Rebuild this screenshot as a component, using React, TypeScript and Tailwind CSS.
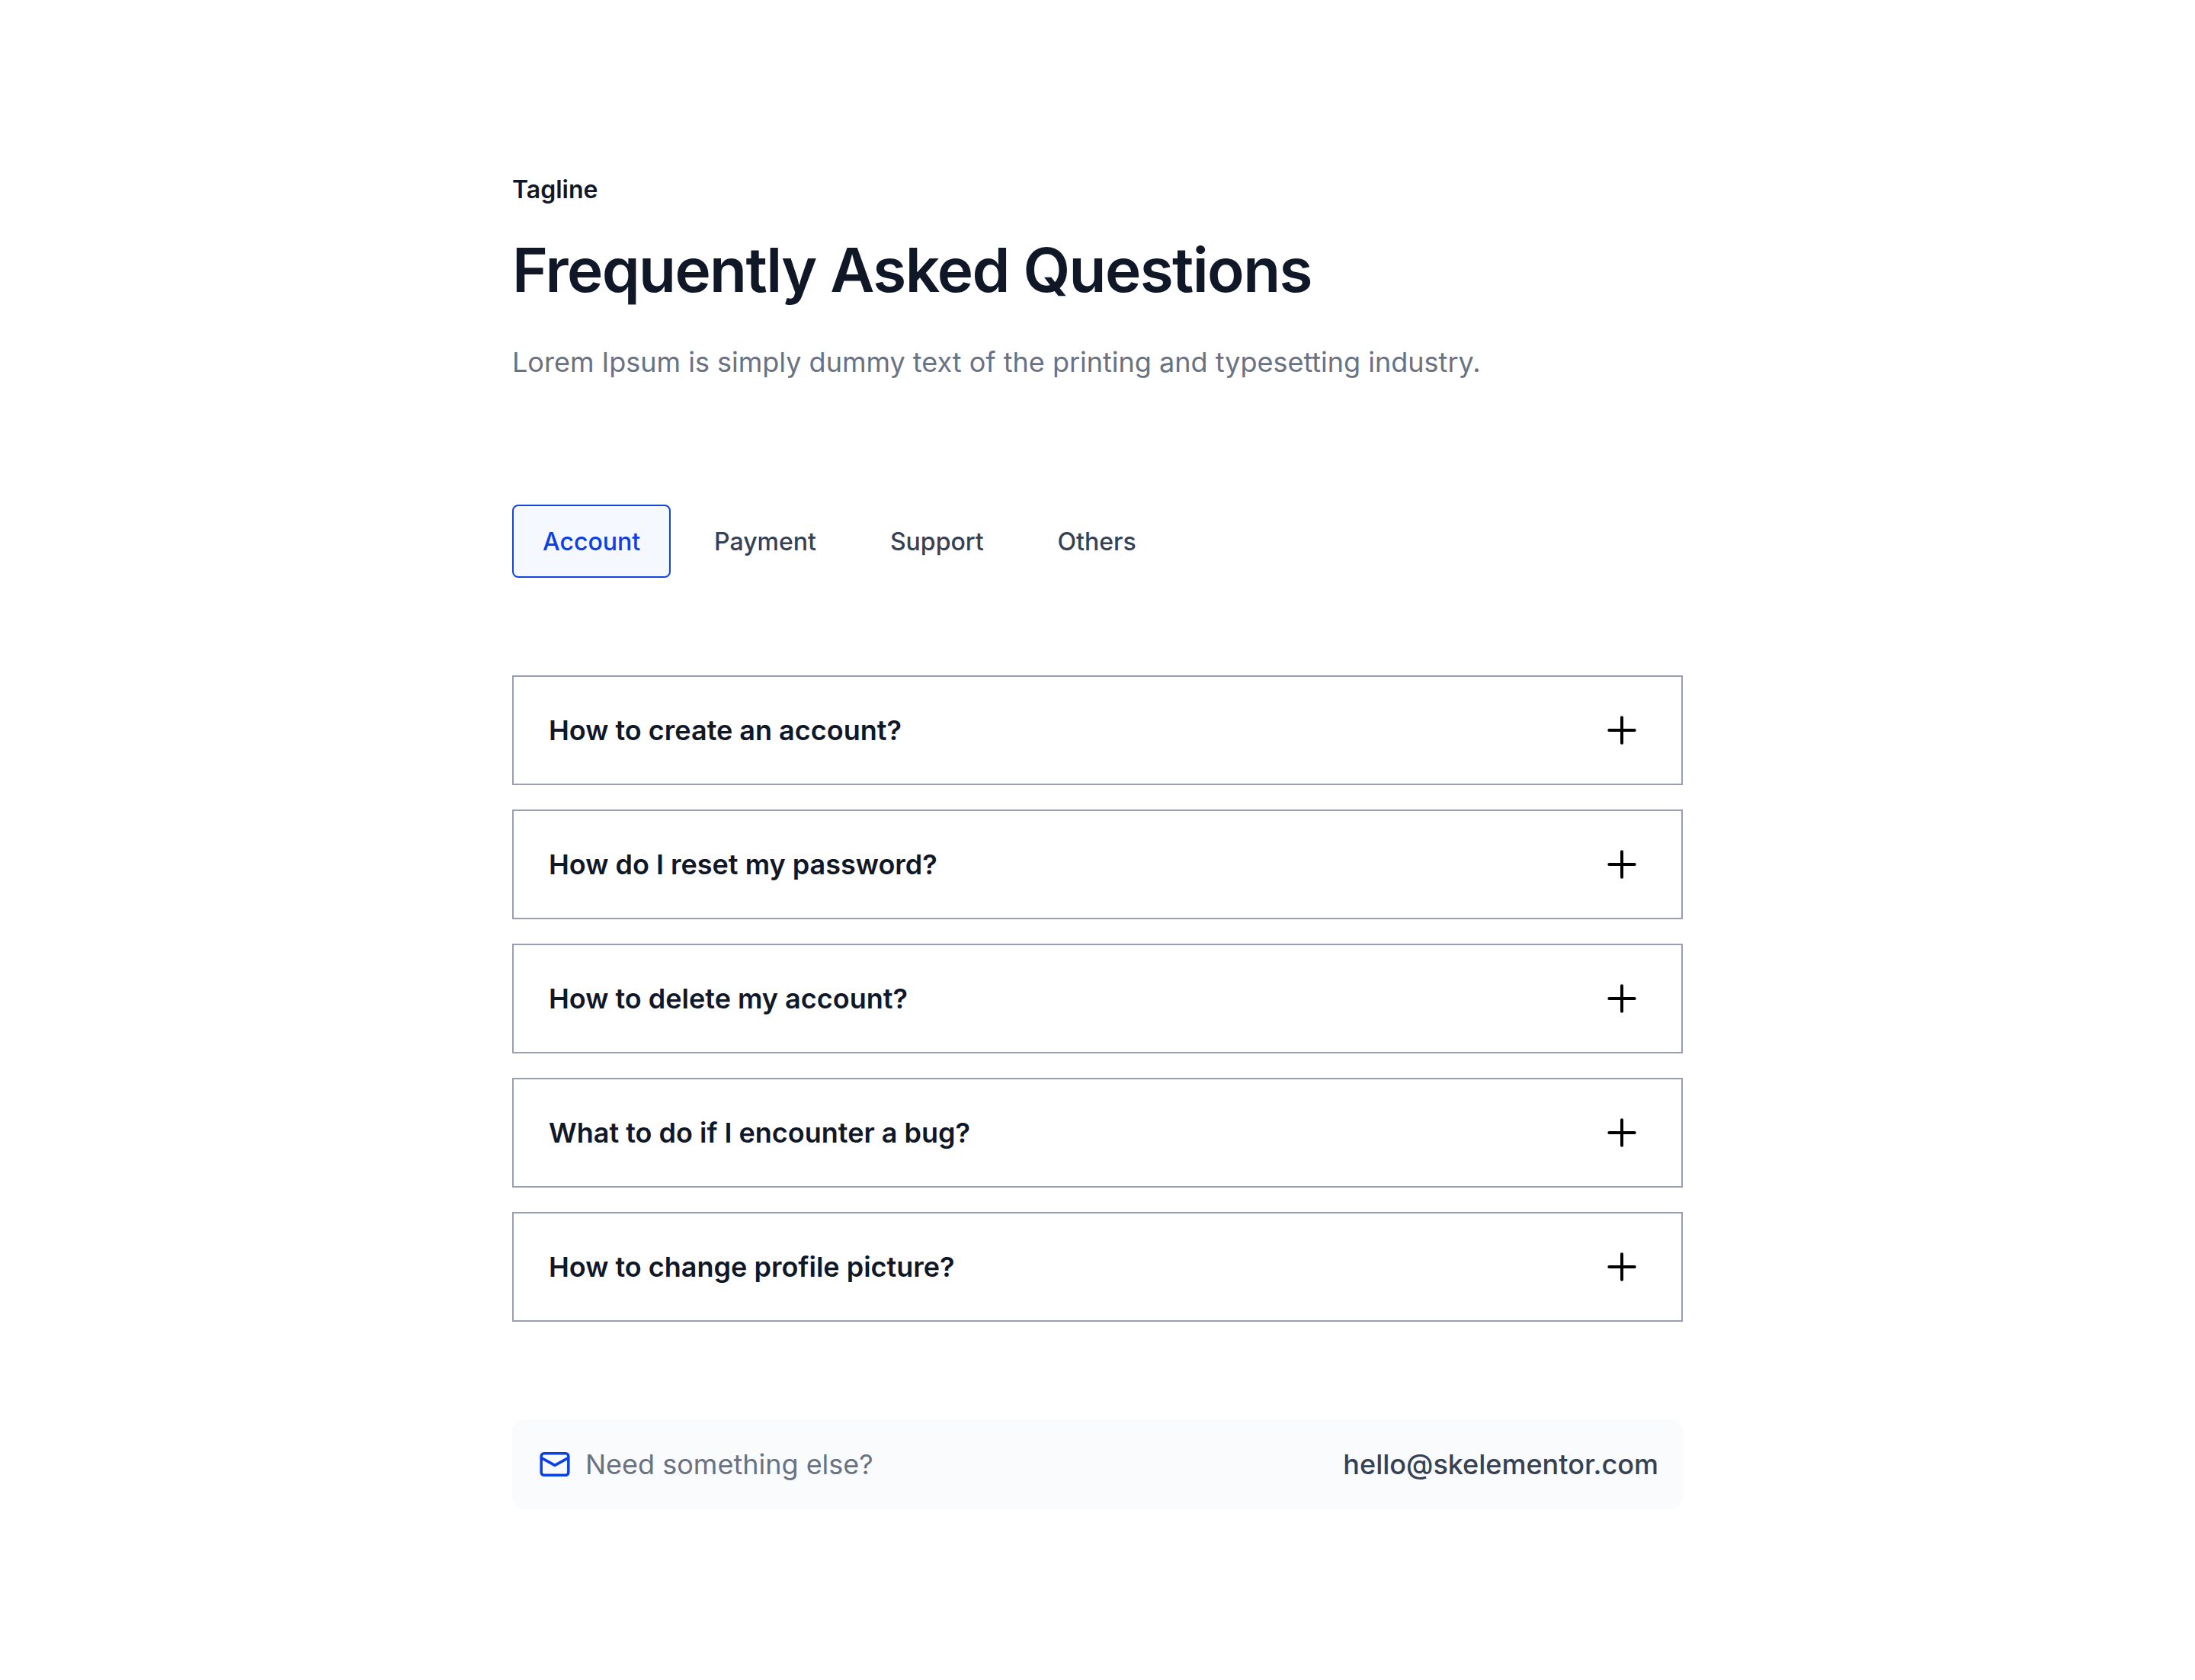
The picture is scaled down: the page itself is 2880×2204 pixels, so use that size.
import { useState } from "react";

const TABS = ["Account", "Payment", "Support", "Others"];

const QUESTIONS = [
  "How to create an account?",
  "How do I reset my password?",
  "How to delete my account?",
  "What to do if I encounter a bug?",
  "How to change profile picture?",
];

function PlusIcon() {
  return (
    <svg className="size-16 shrink-0" viewBox="0 0 64 64" fill="none" stroke="black" strokeWidth="4" strokeLinecap="round" aria-hidden="true">
      <path d="M32 15.3v33.4M15.3 32h33.4" />
    </svg>
  );
}

function MailIcon() {
  return (
    <svg className="size-12 shrink-0" viewBox="0 0 24 24" fill="none" stroke="currentColor" strokeWidth="1.75" strokeLinecap="round" strokeLinejoin="round" aria-hidden="true">
      <rect x="3.1" y="4.9" width="17.8" height="14.2" rx="1.75" />
      <path d="M3.2 7.8L12 12.7l8.8-4.9" />
    </svg>
  );
}

export default function App() {
  const [activeTab, setActiveTab] = useState("Account");

  return (
    <main className="min-h-screen bg-white px-8 py-56 font-['Inter',sans-serif]">
      <div className="mx-auto max-w-[1536px]">
        {/* Heading */}
        <header>
          <p className="text-[32px] leading-[50px] font-semibold text-gray-900">Tagline</p>
          <h1 className="mt-8 text-[80px] leading-[96px] font-semibold tracking-[-0.02em] text-gray-900">
            Frequently Asked Questions
          </h1>
          <p className="mt-[46px] text-[36px] leading-[54px] text-gray-500">
            Lorem Ipsum is simply dummy text of the printing and typesetting industry.
          </p>
        </header>

        {/* Tabs */}
        <div className="mt-40 flex flex-wrap gap-[17px]" role="tablist">
          {TABS.map((tab) => (
            <button
              key={tab}
              type="button"
              role="tab"
              aria-selected={activeTab === tab}
              onClick={() => setActiveTab(tab)}
              className={`rounded-lg border-2 px-[38px] pt-[22px] pb-5 text-[32px] leading-[50px] font-medium ${activeTab === tab ? "border-[#1246e0] bg-[#f5f8ff] text-[#0b3fe8]" : "border-transparent text-gray-700"}`}
            >
              {tab}
            </button>
          ))}
        </div>

        {/* Questions */}
        <div className="mt-32 flex flex-col gap-8">
          {QUESTIONS.map((question) => (
            <button
              key={question}
              type="button"
              className="flex w-full items-center justify-between border-2 border-[#989fb3] px-[46px] py-[38px] text-left text-[36px] leading-[54px] font-semibold text-gray-900"
            >
              {question}
              <PlusIcon />
            </button>
          ))}
        </div>

        {/* Contact bar */}
        <footer className="mt-32 flex items-center justify-between rounded-2xl bg-[#fafbfd] p-8 text-[36px] leading-[54px]">
          <div className="flex items-center gap-4 text-[#0b3fe8]">
            <MailIcon />
            <p className="text-gray-500">Need something else?</p>
          </div>
          <a href="mailto:hello@skelementor.com" className="font-medium text-gray-700">
            hello@skelementor.com
          </a>
        </footer>
      </div>
    </main>
  );
}
